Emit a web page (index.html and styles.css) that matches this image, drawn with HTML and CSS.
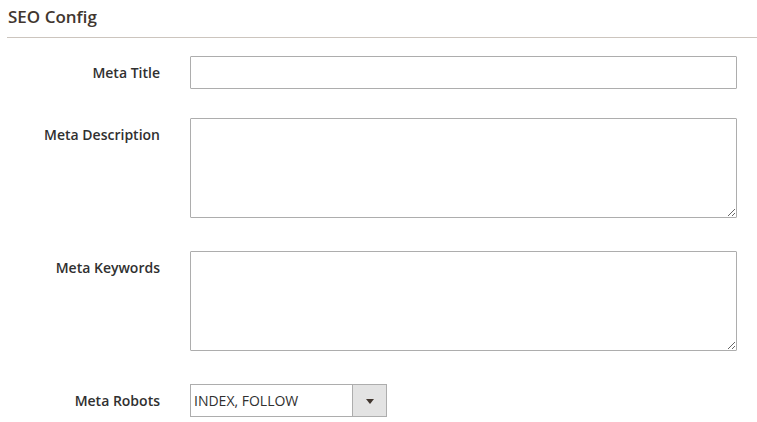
FILE: index.html
```html
<!DOCTYPE html>
<html>
<head>
<meta charset="utf-8">
<link rel="stylesheet" href="styles.css">
</head>
<body>
<div class="page">
  <div class="section-title">SEO Config</div>
  <div class="form">
    <div class="row">
      <label class="label">Meta Title</label>
      <div class="control"><input class="input" type="text"></div>
    </div>
    <div class="row row-area">
      <label class="label">Meta Description</label>
      <div class="control"><textarea class="area"></textarea></div>
    </div>
    <div class="row row-area">
      <label class="label">Meta Keywords</label>
      <div class="control"><textarea class="area"></textarea></div>
    </div>
    <div class="row row-last">
      <label class="label">Meta Robots</label>
      <div class="control">
        <div class="select">
          <span class="select-value">INDEX, FOLLOW</span>
          <span class="select-btn"><span class="arrow"></span></span>
        </div>
      </div>
    </div>
  </div>
</div>
</body>
</html>
```

FILE: styles.css
```css
html, body {
  margin: 0;
  padding: 0;
  background: #fff;
}
.page {
  padding: 0 0 0 7px;
  font-family: "Open Sans", "Noto Sans", sans-serif;
  color: #303030;
}
.section-title {
  font-size: 17px;
  font-weight: 600;
  color: #41362f;
  line-height: 20px;
  padding: 7px 0 0 1px;
  height: 38px;
  box-sizing: border-box;
  border-bottom: 1px solid #ccc5be;
}
.form {
  padding-top: 18px;
}
.row {
  display: grid;
  grid-template-columns: 153px 547px;
  column-gap: 30px;
  margin-bottom: 29px;
}
.row-area {
  margin-bottom: 33px;
}
.row-last {
  margin-bottom: 0;
}
.label {
  text-align: right;
  font-size: 14px;
  font-weight: 600;
  line-height: 33px;
  color: #303030;
}
.input {
  display: block;
  box-sizing: border-box;
  width: 547px;
  height: 33px;
  border: 1px solid #adadad;
  border-radius: 1px;
  margin: 0;
  padding: 0 10px;
  outline: none;
}
.area {
  display: block;
  box-sizing: border-box;
  width: 547px;
  height: 100px;
  border: 1px solid #adadad;
  border-radius: 1px;
  margin: 0;
  padding: 6px 10px;
  resize: both;
  outline: none;
}
.select {
  display: flex;
  box-sizing: border-box;
  width: 197px;
  height: 33px;
  border: 1px solid #adadad;
}
.select-value {
  flex: 1;
  font-size: 14px;
  line-height: 31px;
  padding-left: 3px;
  color: #303030;
}
.select-btn {
  width: 33px;
  background: #e3e3e3;
  border-left: 1px solid #adadad;
  display: flex;
  align-items: center;
  justify-content: center;
}
.arrow {
  width: 0;
  height: 0;
  border-left: 4px solid transparent;
  border-right: 4px solid transparent;
  border-top: 5px solid #41362f;
  margin-top: 1px;
}
```
